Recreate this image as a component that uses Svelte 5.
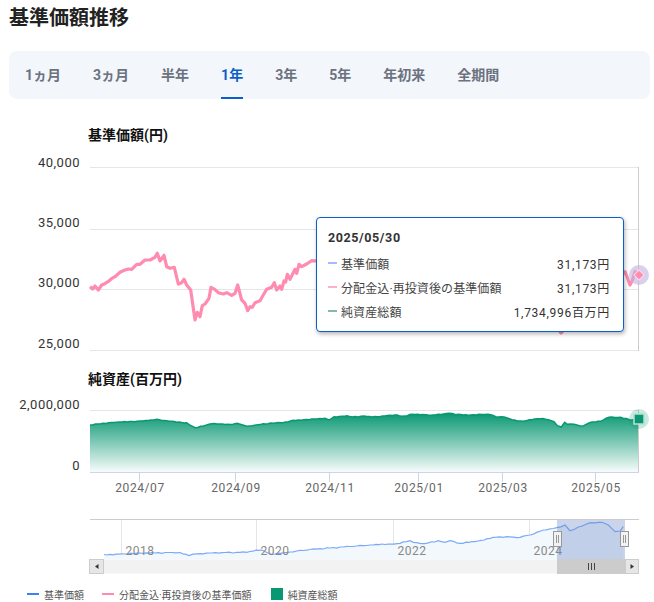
<script>
  const tabs = ['1ヵ月', '3ヵ月', '半年', '1年', '3年', '5年', '年初来', '全期間'];
  let active = $state('1年');

  const priceGrid = [
    { y: 167, base: 167, label: '40,000' },
    { y: 229, base: 227, label: '35,000' },
    { y: 289, base: 287, label: '30,000' },
    { y: 350, base: 348, label: '25,000' }
  ];
  const months = [
    { x: 139.5, label: '2024/07' },
    { x: 235.5, label: '2024/09' },
    { x: 329.5, label: '2024/11' },
    { x: 418.5, label: '2025/01' },
    { x: 502.5, label: '2025/03' },
    { x: 595.5, label: '2025/05' }
  ];
  const years = [
    { x: 121.5, label: '2018' },
    { x: 256.5, label: '2020' },
    { x: 393.5, label: '2022' },
    { x: 529.5, label: '2024' }
  ];

  const price = [[90,286.7],[92.7,289],[95,286],[98.3,290],[101.7,285],[108,281.7],[115,276.7],[120,272.3],[128.3,269],[131.7,269.3],[136.7,264.3],[140,264.3],[145,260],[150,260],[155,257.3],[157.3,253.3],[160,261],[164,255.3],[166.7,266.7],[170,268.3],[174.3,267.3],[178.3,284],[181.7,282.7],[184,279.3],[186.7,285],[190.7,290],[195,320],[197.3,312.3],[200,316.7],[202.3,305.7],[205,304],[209,298.3],[211,287.3],[218.3,292.7],[223.3,294],[226.7,292.7],[231.7,295.3],[235,293.3],[237.7,285],[241.7,300],[245,303.3],[247.7,310.7],[250,306.7],[252.3,307.3],[255,302.7],[260,300.7],[266.7,289.3],[271.7,287.3],[274.3,282.7],[276.7,290],[280,286],[281.7,289.3],[284,281],[285.7,282],[287.3,274.3],[290,279.3],[295,269.3],[296.7,273.3],[299,264.3],[301.7,266.7],[306.7,264],[311.7,260.7],[330,258],[400,262],[480,275],[540,300],[561,333],[590,310],[620,276],[625,271.7],[627.5,278],[630,285],[632.5,280],[635,271.7],[639,275]];

  const assets = [[90,425],[116.7,422.3],[140,421],[156.7,419.3],[176.7,422.3],[186.7,422.7],[195,427.7],[211.7,423.7],[233,424.3],[237,423.3],[246.7,426.3],[263,423.7],[283,422.7],[293,420.3],[325,418.3],[329,420],[334,416.7],[347.3,415.7],[352.3,417],[364,416],[377.3,416.7],[397.3,415],[402.3,416.3],[412.3,414.3],[430.7,415.3],[449,413.3],[455.7,414.7],[470.7,415],[479,414.3],[490.7,414.7],[495.7,416.7],[504,417],[517.3,421],[524,421.3],[537.3,418.7],[545.7,419.3],[554,421.7],[557.3,425.7],[561.3,427],[564.7,422.3],[567.3,424.3],[574,424.3],[582.3,426.3],[589,423],[600.7,421.3],[609,417.3],[620.7,417.3],[632.3,420],[639,419]];

  const overview = [[104,554.5],[125,554],[140,553],[155,553],[172,552.5],[180,552.5],[189,555.5],[197,553.8],[225,552.5],[233,553],[250,551.5],[262,550],[272,554.5],[290,552],[310,549.5],[330,548],[350,546.5],[370,545],[385,544.5],[400,543.3],[410,540.7],[416.7,542.7],[425,543.7],[438,540.7],[445,542.3],[450,540.7],[460,543.3],[475,541.7],[493.3,537.3],[506.7,536.7],[516.7,537.7],[530,535],[543.3,530],[556.7,527.7],[565,525],[570,530.7],[575,529],[588.3,523.3],[601.7,522.3],[608.3,525],[611.7,528.3],[615,531.7],[620,531],[623.3,526.7]];

  // the daily data is noisy, so split long segments and wobble them a little
  function roughen(list, step, amount) {
    const out = [list[0]];
    for (let i = 1; i < list.length; i++) {
      const [x0, y0] = list[i - 1];
      const [x1, y1] = list[i];
      const parts = Math.max(1, Math.floor((x1 - x0) / step));
      for (let k = 1; k < parts; k++) {
        const t = k / parts;
        const x = x0 + (x1 - x0) * t;
        const wobble = (Math.sin(x * 2.3) + Math.sin(x * 0.9)) * amount;
        out.push([+x.toFixed(1), +(y0 + (y1 - y0) * t + wobble).toFixed(1)]);
      }
      out.push(list[i]);
    }
    return out;
  }

  const toPoints = (list) => list.map(([x, y]) => `${x},${y}`).join(' ');
  const areaOf = (list, base) => `${list[0][0]},${base} ${toPoints(list)} ${list[list.length - 1][0]},${base}`;

  const pricePts = roughen(price, 3, 0.5);
  const assetPts = roughen(assets, 2.5, 0.25);
  const overviewPts = roughen(overview, 3, 0.3);
</script>

<div class="page">
  <h2 class="title">基準価額推移</h2>

  <nav class="tabs">
    {#each tabs as tab}
      <button class="tab" class:active={tab === active} onclick={() => (active = tab)}>{tab}</button>
    {/each}
  </nav>

  <div class="chart">
    <svg width="654" height="478" viewBox="0 108 654 478">
      <defs>
        <linearGradient id="assetFill" x1="0" y1="0" x2="0" y2="1">
          <stop offset="0" stop-color="#0a9873" />
          <stop offset="1" stop-color="#0a9873" stop-opacity="0.03" />
        </linearGradient>
      </defs>

      <text class="heading" x="88" y="140">基準価額(円)</text>
      {#each priceGrid as row}
        <line class="grid" x1="90" x2="638" y1={row.y + 0.5} y2={row.y + 0.5} />
        <text class="axis" x="80" y={row.base}>{row.label}</text>
      {/each}
      <line class="edge" x1="638.5" x2="638.5" y1="167" y2="351" />
      <polyline class="price" points={toPoints(pricePts)} />
      <circle cx="639" cy="275" r="10" fill="#c3b1df" fill-opacity="0.6" />
      <rect x="635.5" y="271.5" width="7" height="7" fill="#ff8cb0" stroke="#fbd9e6" transform="rotate(45 639 275)" />

      <text class="heading" x="88" y="384">純資産(百万円)</text>
      <text class="axis" x="80" y="409">2,000,000</text>
      <text class="axis" x="80" y="470">0</text>
      <line class="grid" x1="90" x2="638" y1="410.5" y2="410.5" />
      <polygon points={areaOf(assetPts, 472)} fill="url(#assetFill)" />
      <polyline class="asset" points={toPoints(assetPts)} />
      <line class="edge" x1="638.5" x2="638.5" y1="410" y2="472" />
      <line class="base" x1="90" x2="639" y1="472.5" y2="472.5" />
      {#each months as m}
        <line class="base" x1={m.x} x2={m.x} y1="472" y2="482" />
        <text class="month" x={m.x + 0.5} y="492">{m.label}</text>
      {/each}
      <circle cx="639" cy="419" r="10" fill="#0a9873" fill-opacity="0.22" />
      <rect x="634" y="414" width="10" height="10" fill="#0a9873" stroke="#b7e0d3" stroke-width="1.5" />

      <!-- navigator -->
      <line class="top" x1="90" x2="639" y1="519.5" y2="519.5" />
      {#each years as yr}
        <line class="grid" x1={yr.x} x2={yr.x} y1="520" y2="559" />
      {/each}
      <polygon points={areaOf(overviewPts, 559)} fill="#f2f8fc" />
      <polyline class="overview" points={toPoints(overviewPts)} />
      {#each years as yr}
        <text class="year" x={yr.x + 4} y="555">{yr.label}</text>
      {/each}
      <rect x="557" y="520" width="68" height="39" fill="#6685c2" fill-opacity="0.35" />

      <rect x="89.5" y="559.5" width="549" height="14" fill="#f2f2f2" />
      <rect x="89.5" y="559.5" width="14" height="14" class="btn" />
      <path d="M98.5 564 L95 566.5 L98.5 569 Z" fill="#333" />
      <rect x="557" y="559" width="68" height="15" fill="#cccccc" />
      <path d="M588.5 563v7M591.5 563v7M594.5 563v7" stroke="#444" fill="none" />
      <rect x="625.5" y="559.5" width="13" height="14" class="btn" />
      <path d="M630.5 564 L634 566.5 L630.5 569 Z" fill="#333" />

      {#each [553.5, 620.5] as hx}
        <rect x={hx} y="531.5" width="8" height="15" fill="#f2f2f2" stroke="#999" />
        <path d={`M${hx + 3} 535v8M${hx + 5} 535v8`} stroke="#999" fill="none" />
      {/each}
    </svg>

    <div class="tip">
      <div class="tip-date">2025/05/30</div>
      <div class="tip-row"><i class="mark blue"></i><span>基準価額</span><b>31,173円</b></div>
      <div class="tip-row"><i class="mark pink"></i><span>分配金込·再投資後の基準価額</span><b>31,173円</b></div>
      <div class="tip-row"><i class="mark green"></i><span>純資産総額</span><b>1,734,996百万円</b></div>
    </div>
  </div>

  <div class="legend">
    <span class="item"><i class="key line-blue"></i>基準価額</span>
    <span class="item"><i class="key line-pink"></i>分配金込·再投資後の基準価額</span>
    <span class="item"><i class="key box-green"></i>純資産総額</span>
  </div>
</div>

<style>
  :global(body) {
    margin: 0;
    background: #fff;
  }

  .page {
    width: 654px;
    height: 602px;
    overflow: hidden;
    font-family: Roboto, "Noto Sans CJK JP", sans-serif;
  }

  .title {
    margin: 0;
    padding: 4px 0 0 9px;
    height: 51px;
    box-sizing: border-box;
    font-size: 20px;
    line-height: 28px;
    font-weight: 700;
    color: #222;
  }

  .tabs {
    display: flex;
    gap: 32px;
    margin: 0 4px 0 9px;
    padding: 0 16px;
    height: 48px;
    background: #f3f6fa;
    border-radius: 8px;
  }

  .tab {
    height: 48px;
    padding: 0;
    border: 0;
    border-bottom: 2px solid transparent;
    background: none;
    font: 700 14px/48px Roboto, "Noto Sans CJK JP", sans-serif;
    color: #6b7280;
    cursor: pointer;
  }

  .tab.active {
    color: #0b5fc9;
    border-bottom-color: #0b5fc9;
  }

  .chart {
    position: relative;
    height: 478px;
    margin-top: 9px;
  }

  svg {
    display: block;
  }

  svg text {
    font-family: Roboto, "Noto Sans CJK JP", sans-serif;
  }

  .heading {
    font-size: 14px;
    font-weight: 700;
    fill: #111;
  }

  .axis {
    font-size: 13px;
    letter-spacing: 0.5px;
    text-anchor: end;
    fill: #333;
  }

  .month {
    font-size: 12px;
    letter-spacing: 0.6px;
    text-anchor: middle;
    fill: #666;
  }

  .year {
    font-size: 12px;
    letter-spacing: 0.5px;
    fill: #888;
  }

  .grid {
    stroke: #e6e6e6;
  }

  .edge {
    stroke: #cccccc;
  }

  .base {
    stroke: #ccd6eb;
  }

  .top {
    stroke: #cccccc;
  }

  .price {
    fill: none;
    stroke: #ff8cb0;
    stroke-width: 3.2;
    stroke-linejoin: round;
  }

  .asset {
    fill: none;
    stroke: #0a9873;
    stroke-width: 1.5;
  }

  .overview {
    fill: none;
    stroke: #7aaaf7;
    stroke-width: 1.2;
  }

  .btn {
    fill: #e6e6e6;
    stroke: #cccccc;
  }

  .tip {
    position: absolute;
    left: 316px;
    top: 109px;
    width: 308px;
    height: 115px;
    box-sizing: border-box;
    padding: 10px 13px 0 11px;
    background: #fff;
    border: 1px solid #0b5fc9;
    border-radius: 4px;
    box-shadow: 1px 2px 4px rgba(0, 0, 0, 0.3);
    font-size: 12px;
    color: #444;
  }

  .tip-date {
    font-weight: 700;
    font-size: 12.5px;
    line-height: 20px;
    letter-spacing: 0.6px;
    color: #333;
    margin-bottom: 3px;
  }

  .tip-row {
    display: flex;
    align-items: center;
    height: 24px;
    letter-spacing: 0.1px;
  }

  .tip-row b {
    margin-left: auto;
    font-weight: 400;
    letter-spacing: 0.7px;
    color: #333;
  }

  .mark {
    width: 9px;
    height: 2px;
    margin-right: 4px;
  }

  .blue { background: #a2bdf8; }
  .pink { background: #ffafc8; }
  .green { background: #85b9ab; }

  .legend {
    display: flex;
    align-items: center;
    gap: 18px;
    height: 16px;
    padding-left: 27px;
    font-size: 10px;
    color: #555;
  }

  .item {
    display: flex;
    align-items: center;
    gap: 5px;
  }

  .item:last-child {
    margin-left: 1px;
  }

  .key {
    display: block;
    width: 12px;
  }

  .line-blue {
    height: 2px;
    background: #3b82f6;
  }

  .line-pink {
    height: 2px;
    background: #ff8cb0;
  }

  .box-green {
    height: 12px;
    background: #0a9873;
  }
</style>
